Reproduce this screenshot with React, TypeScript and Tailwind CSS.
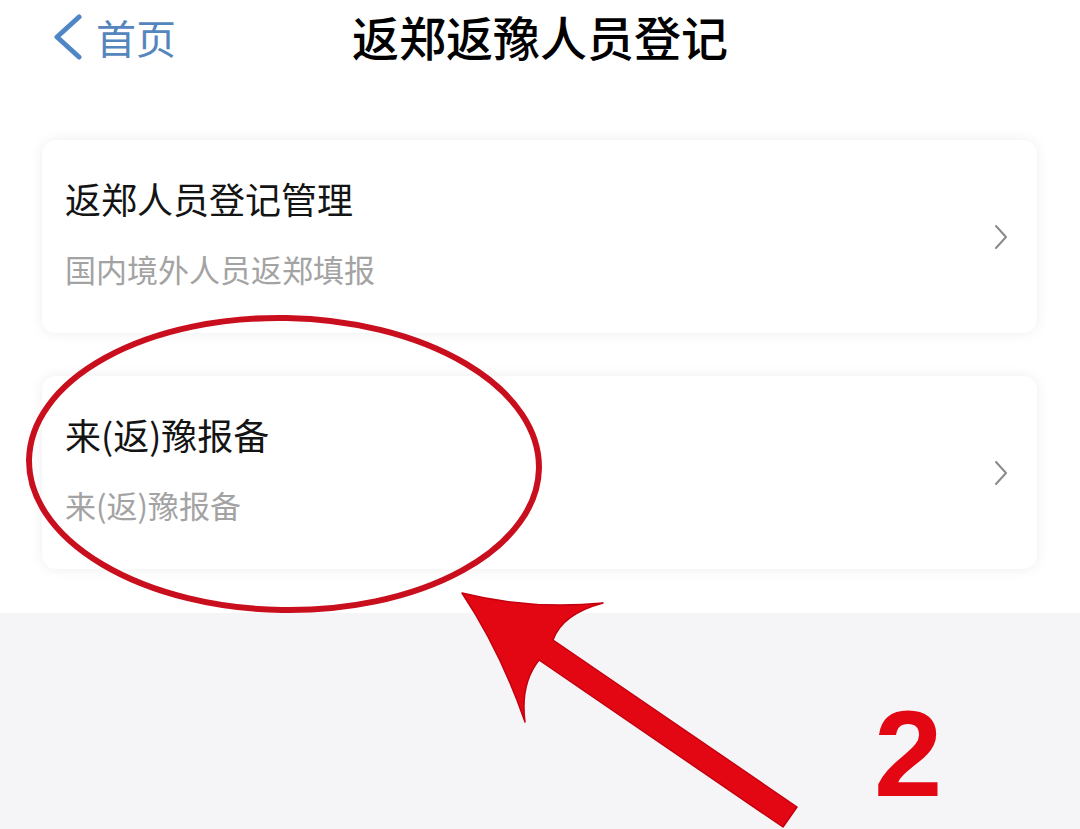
import React from "react";

const cjk = "font-['Noto_Sans_CJK_SC','Noto_Sans',sans-serif]";

function Chevron() {
  return (
    <svg width="14" height="26" viewBox="0 0 14 26" fill="none">
      <path d="M2 2 L12 13 L2 24" stroke="#8a8a8a" strokeWidth="2" strokeLinecap="round" strokeLinejoin="round" />
    </svg>
  );
}

function Card({ title, sub }: { title: string; sub: string }) {
  return (
    <div className="h-[193px] rounded-[14px] bg-white shadow-[0_0_14px_rgba(0,0,0,0.07)] flex items-center justify-between pl-[23px] pr-[29px]">
      <div className="flex flex-col pb-[9px]">
        <div className="text-[36px] leading-[44px] text-[#141414]">{title}</div>
        <div className="mt-[29px] text-[31px] leading-[40px] text-[#a3a3a3]">{sub}</div>
      </div>
      <Chevron />
    </div>
  );
}

export default function App() {
  return (
    <div className={`relative w-[1080px] h-[829px] overflow-hidden bg-[#f5f5f8] ${cjk}`}>
      <div className="bg-white h-[613px] flex flex-col">
        <div className="h-[74px] grid grid-cols-[1fr_auto_1fr] items-center">
          <div className="flex items-center pl-[52px] gap-[14px]">
            <svg width="30" height="46" viewBox="0 0 30 46" fill="none">
              <path d="M27 3 L5 23 L27 43" stroke="#4f86c6" strokeWidth="5" strokeLinecap="round" strokeLinejoin="round" />
            </svg>
            <span className="text-[40px] leading-[48px] text-[#5585bd]">首页</span>
          </div>
          <div className="text-[47px] leading-[56px] font-medium text-black pb-[2px]">返郑返豫人员登记</div>
          <div />
        </div>
        <div className="flex flex-col gap-[43px] pl-[42px] pr-[43px] pt-[66px]">
          <Card title="返郑人员登记管理" sub="国内境外人员返郑填报" />
          <Card title="来(返)豫报备" sub="来(返)豫报备" />
        </div>
      </div>

      <svg className="absolute inset-0 pointer-events-none" width="1080" height="829" viewBox="0 0 1080 829">
        <ellipse cx="284" cy="464" rx="255" ry="146" fill="none" stroke="#c90f1d" strokeWidth="6" transform="rotate(1 284 464)" />
        <path
          d="M462 593 Q530 610 603 603 Q562 614 553 640 L797 807 L783 827 L539 660 Q520 684 525 722 Q500 650 462 593 Z"
          fill="#e30613"
          stroke="#c4000f"
          strokeWidth="1.5"
          strokeLinejoin="round"
        />
      </svg>
      <div className="absolute left-[874px] top-[684px] font-['Liberation_Sans',sans-serif] font-bold text-[123px] leading-[140px] text-[#e30613]">
        2
      </div>
    </div>
  );
}
